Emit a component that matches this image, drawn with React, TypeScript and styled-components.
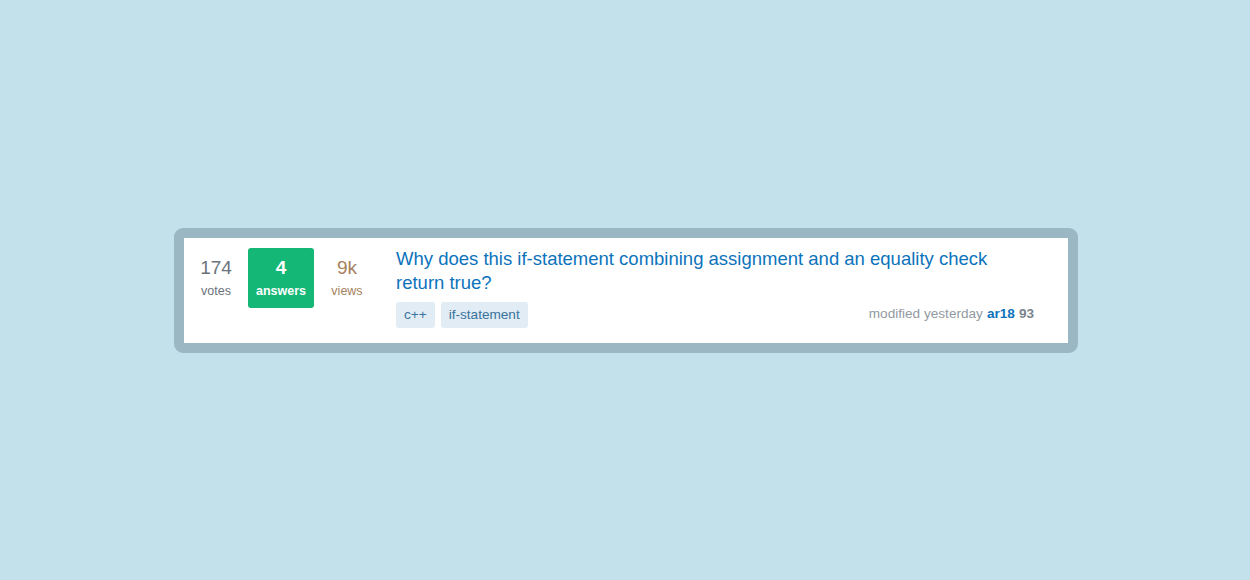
import React from 'react';
import styled, { createGlobalStyle } from 'styled-components';

const GlobalStyle = createGlobalStyle`
  html, body {
    margin: 0;
    padding: 0;
    background: #c2e1eb;
    font-family: 'Liberation Sans', Arial, sans-serif;
  }
`;

const Page = styled.div`
  width: 1250px;
  height: 580px;
  display: flex;
  align-items: center;
  justify-content: center;
`;

const Frame = styled.div`
  width: 884px;
  border: 10px solid #9cb7c4;
  border-radius: 9px;
  background: #9cb7c4;
  margin-left: 2px;
  margin-top: 1px;
`;

const Card = styled.div`
  background: #fff;
  display: flex;
  align-items: flex-start;
  padding: 10px 34px 14px 0;
  min-height: 81px;
`;

const Stats = styled.div`
  display: grid;
  grid-template-columns: 64px 66px 66px;
  margin-right: 16px;
`;

const Stat = styled.div<{ $tone: 'votes' | 'answered' | 'views' }>`
  height: 60px;
  display: flex;
  flex-direction: column;
  align-items: center;
  justify-content: center;
  border-radius: 3px;
  background: ${(p) => (p.$tone === 'answered' ? '#15b777' : 'transparent')};
  color: ${(p) =>
    p.$tone === 'answered' ? '#fff' : p.$tone === 'views' ? '#a58160' : '#6a737c'};
  font-weight: ${(p) => (p.$tone === 'answered' ? 'bold' : 'normal')};
`;

const StatNumber = styled.span`
  font-size: 19px;
  line-height: 22px;
`;

const StatLabel = styled.span`
  font-size: 12.5px;
  line-height: 16px;
  margin-top: 4px;
`;

const Summary = styled.div`
  flex: 1;
  display: flex;
  flex-direction: column;
`;

const Title = styled.a`
  font-size: 18.5px;
  line-height: 24px;
  color: #0c73bb;
  text-decoration: none;
  max-width: 620px;
  margin-top: -1px;
`;

const Bottom = styled.div`
  display: flex;
  align-items: center;
  justify-content: space-between;
  margin-top: 7px;
`;

const Tags = styled.div`
  display: flex;
  gap: 6px;
`;

const Tag = styled.span`
  background: #e1ecf4;
  color: #39739d;
  font-size: 13.6px;
  line-height: 26px;
  height: 26px;
  padding: 0 8px;
  border-radius: 3px;
`;

const Meta = styled.div`
  font-size: 13.6px;
  color: #929aa2;
  margin-top: -3px;
`;

const User = styled.span`
  color: #0c73bb;
  font-weight: bold;
  margin-left: 4px;
`;

const Rep = styled.span`
  color: #7b848c;
  font-weight: bold;
  margin-left: 4px;
`;

export default function App() {
  return (
    <>
      <GlobalStyle />
      <Page>
        <Frame>
          <Card>
            <Stats>
              <Stat $tone="votes">
                <StatNumber>174</StatNumber>
                <StatLabel>votes</StatLabel>
              </Stat>
              <Stat $tone="answered">
                <StatNumber>4</StatNumber>
                <StatLabel>answers</StatLabel>
              </Stat>
              <Stat $tone="views">
                <StatNumber>9k</StatNumber>
                <StatLabel>views</StatLabel>
              </Stat>
            </Stats>
            <Summary>
              <Title href="#">
                Why does this if-statement combining assignment and an equality check return true?
              </Title>
              <Bottom>
                <Tags>
                  <Tag>c++</Tag>
                  <Tag>if-statement</Tag>
                </Tags>
                <Meta>
                  modified yesterday<User>ar18</User><Rep>93</Rep>
                </Meta>
              </Bottom>
            </Summary>
          </Card>
        </Frame>
      </Page>
    </>
  );
}
